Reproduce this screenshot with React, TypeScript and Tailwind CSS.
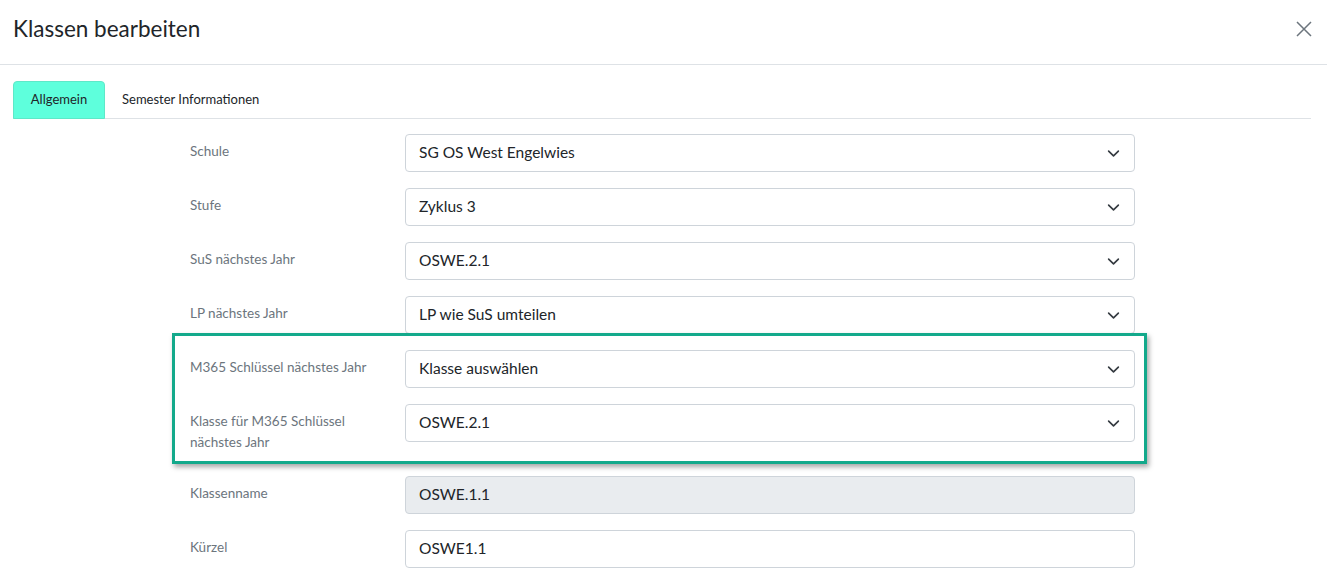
import React from 'react';

const font = { fontFamily: 'Lato, "Noto Sans", sans-serif' };

const Chevron: React.FC = () => (
  <svg width="13" height="13" viewBox="0 0 16 16" fill="none" className="text-[#343a40]">
    <path d="M2 5l6 6 6-6" stroke="currentColor" strokeWidth="2" strokeLinecap="round" strokeLinejoin="round" />
  </svg>
);

type RowProps = {
  label: React.ReactNode;
  value: string;
  select?: boolean;
  disabled?: boolean;
};

const Row: React.FC<RowProps> = ({ label, value, select = true, disabled = false }) => (
  <div className="flex mb-4">
    <label className="w-[215px] shrink-0 py-[7px] text-[13.5px] leading-[21px] text-[#6c757d]">{label}</label>
    <div
      className={`flex-1 h-[38px] flex items-center justify-between pl-[13px] pr-[14px] border border-[#ced4da] rounded-[4px] text-[15.5px] text-[#212529] ${
        disabled ? 'bg-[#e9ecef]' : 'bg-white'
      }`}
    >
      <span>{value}</span>
      {select && <Chevron />}
    </div>
  </div>
);

export default function App() {
  return (
    <div className="w-[1327px] h-[579px] bg-white overflow-hidden" style={font}>
      {/* Header */}
      <div className="h-[65px] flex items-center justify-between px-[13px] border-b border-[#dee2e6]">
        <h1 className="text-[22.5px] text-[#212529] -mt-[6px]">Klassen bearbeiten</h1>
        <button className="text-[#6c757d] mr-[2px] -mt-[6px]">
          <svg width="16" height="16" viewBox="0 0 16 16">
            <path d="M1 1l14 14M15 1L1 15" stroke="currentColor" strokeWidth="1.5" />
          </svg>
        </button>
      </div>

      {/* Tabs */}
      <div className="ml-[13px] mr-[16px] mt-[16px] flex border-b border-[#dee2e6]">
        <div className="w-[92px] h-[38px] -mb-px flex items-center justify-center rounded-t-[4px] bg-[#5effdc] border border-[#5ee8c8] text-[13px] text-[#212529]">
          Allgemein
        </div>
        <div className="h-[37px] flex items-center px-[17px] text-[13px] text-[#212529]">Semester Informationen</div>
      </div>

      {/* Form */}
      <div className="w-[945px] ml-[190px] mt-[15px]">
        <Row label="Schule" value="SG OS West Engelwies" />
        <Row label="Stufe" value="Zyklus 3" />
        <Row label="SuS nächstes Jahr" value="OSWE.2.1" />
        <Row label="LP nächstes Jahr" value="LP wie SuS umteilen" />

        <div className="relative flex flex-col">
          <div className="absolute -left-[18px] -right-[12px] -top-[17px] bottom-[12px] border-[3px] border-[#13a98b] shadow-[2px_3px_5px_rgba(0,0,0,0.35)] pointer-events-none" />
          <Row label="M365 Schlüssel nächstes Jahr" value="Klasse auswählen" />
          <Row
            label={
              <>
                Klasse für M365 Schlüssel
                <br />
                nächstes Jahr
              </>
            }
            value="OSWE.2.1"
          />
        </div>

        <Row label="Klassenname" value="OSWE.1.1" select={false} disabled />
        <Row label="Kürzel" value="OSWE1.1" select={false} />
      </div>
    </div>
  );
}
